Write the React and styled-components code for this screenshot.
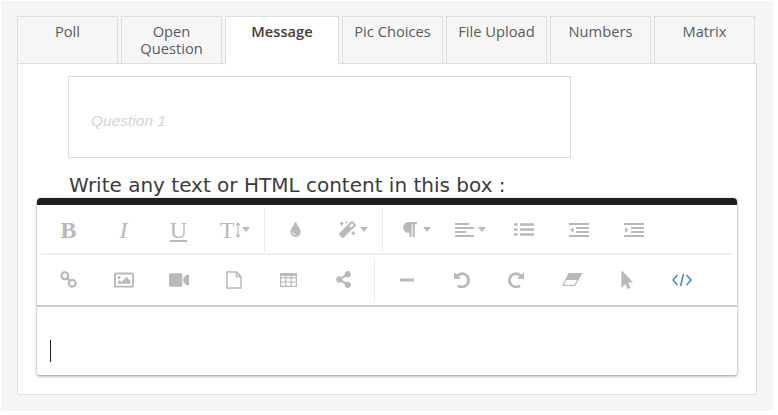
import React from "react";
import styled, { createGlobalStyle } from "styled-components";
import { FaTint, FaMagic, FaParagraph, FaVideo, FaRegImage, FaShareAlt, FaMinus, FaMousePointer } from "react-icons/fa";

const Global = createGlobalStyle`
  html, body { margin: 0; padding: 0; background: #fff; }
  * { box-sizing: border-box; }
`;
const Page = styled.div`
  margin: 1px 0 0 1px; width: 772px; height: 410px; background: #f5f5f5;
  padding: 15px 0 0 16px; font-family: "Open Sans", sans-serif;
`;
const Tabs = styled.div`display: flex; gap: 3px; height: 48px; position: relative; z-index: 1;`;
const Tab = styled.div`
  width: ${p => p.$active ? 114 : 101}px; height: ${p => p.$active ? 49 : 48}px;
  border: 1px solid #dfdfdf; border-bottom: ${p => p.$active ? "none" : "1px solid #dfdfdf"};
  background: ${p => p.$active ? "#fff" : "#f6f6f6"};
  color: ${p => p.$active ? "#4b3c33" : "#5a5a5a"};
  font-weight: ${p => p.$active ? 600 : 400}; font-size: 14.7px; line-height: 17px;
  text-align: center; padding-top: 6px;
`;
const Panel = styled.div`
  width: 740px; height: 332px; margin-top: -1px; background: #fff; border: 1px solid #dfdfdf;
  border-radius: 0 0 2px 2px; padding: 12px 19px 0;
`;
const QuestionBox = styled.div`
  margin-left: 31px; width: 503px; height: 82px; border: 1px solid #dcdcdc;
  display: flex; align-items: center; padding: 7px 0 0 22px;
  font: italic 15.5px "Liberation Sans", sans-serif; color: #d4d4d4;
`;
const Label = styled.div`
  margin: 15px 0 0 32px; font-size: 20px; line-height: 24px; color: #3c3c3c; height: 25px; white-space: nowrap;
  font-family: "DejaVu Sans", sans-serif;
`;
const Editor = styled.div`
  width: 700px; height: 177px; background: #fff; border-top: 7px solid #1f1f1f; border-radius: 4px 4px 2px 2px;
  box-shadow: 0 1px 3px rgba(0,0,0,.45);
  display: flex; flex-direction: column;
`;
const Toolbar = styled.div`height: 102px; padding: 1px 6px 0 4px; border-bottom: 2px solid #cfcfcf; flex: none;`;
const Row = styled.div`
  display: flex; align-items: center; height: 49px;
  border-bottom: ${p => p.$last ? "none" : "2px solid #f0f0f0"};
`;
const Sep = styled.span`width: 1px; height: 44px; background: #ececec; flex: none; margin-left: ${p => p.$ml || 0}px;`;
const Btn = styled.span`
  width: ${p => p.$w || 55}px; flex: none; display: flex; align-items: center; justify-content: center; gap: ${p => p.$gap ?? 4}px;
  color: ${p => p.$blue ? "#4d85e0" : "#b9b9b9"}; padding-right: ${p => p.$pr || 0}px;
`;
const Glyph = styled.span`
  font: ${p => p.$italic ? "italic" : "normal"} ${p => p.$bold ? 700 : 400} 24px/24px "Liberation Serif", serif;
  text-decoration: ${p => p.$under ? "underline" : "none"}; text-decoration-thickness: 2px; text-underline-offset: 2px;
`;
const Caret = styled.i`width: 0; height: 0; border: 4px solid transparent; border-top: 5px solid #b9b9b9; border-bottom: 0;`;
const Body = styled.div`flex: 1; padding: 33px 0 0 13px;`;
const Cursor = styled.div`width: 1px; height: 22px; background: #222;`;

const Icon = ({ w, h, children, fill = "none", stroke = "currentColor", sw = 2 }) => (
  <svg width={w} height={h} viewBox={`0 0 ${w} ${h}`} fill={fill} stroke={stroke} strokeWidth={sw}>{children}</svg>
);

const tabs = [["Poll"], ["Open Question"], ["Message", true], ["Pic Choices"], ["File Upload"], ["Numbers"], ["Matrix"]];

export default function App() {
  return (
    <Page>
      <Global />
      <Tabs>{tabs.map(([t, a]) => <Tab key={t} $active={a}>{t}</Tab>)}</Tabs>
      <Panel>
        <QuestionBox>Question 1</QuestionBox>
        <Label>Write any text or HTML content in this box :</Label>
        <Editor>
          <Toolbar>
            <Row>
              <Btn><Glyph $bold>B</Glyph></Btn>
              <Btn><Glyph $italic>I</Glyph></Btn>
              <Btn><Glyph $under>U</Glyph></Btn>
              <Btn $w={58} $gap={1}>
                <Glyph>T</Glyph>
                <Icon w={6} h={16} sw={1.2}><path d="M3 1v14M1 3.5 3 1l2 2.5M1 12.5 3 15l2-2.5" /></Icon>
                <Caret />
              </Btn>
              <Sep />
              <Btn $w={60}><FaTint size={15} /></Btn>
              <Btn $w={57}><FaMagic size={17} /><Caret /></Btn>
              <Sep />
              <Btn $w={66} $gap={5}><FaParagraph size={17} /><Caret /></Btn>
              <Btn $w={47} $pr={5}>
                <Icon w={19} h={15} sw={1.8}><path d="M0 2h14M0 6h19M0 10h11M0 14h19" /></Icon>
                <Caret />
              </Btn>
              <Btn>
                <Icon w={20} h={15} sw={2.4}><path d="M6 2.5h14M6 7.5h14M6 12.5h14" /><path d="M0 2.5h3.5M0 7.5h3.5M0 12.5h3.5" /></Icon>
              </Btn>
              <Btn>
                <Icon w={20} h={15} sw={2}>
                  <path d="M0 2h20M7 6h13M7 10h13M0 14h20" />
                  <path d="M4.5 5v6L1 8z" fill="currentColor" stroke="none" />
                </Icon>
              </Btn>
              <Btn>
                <Icon w={20} h={15} sw={2}>
                  <path d="M0 2h20M7 6h13M7 10h13M0 14h20" />
                  <path d="M1 5v6l3.5-3z" fill="currentColor" stroke="none" />
                </Icon>
              </Btn>
            </Row>
            <Row $last>
              <Btn>
                <Icon w={17} h={17} sw={2.2}>
                  <circle cx="4.8" cy="4.8" r="3.4" /><circle cx="12.2" cy="12.2" r="3.4" /><path d="M7 7l3 3" />
                </Icon>
              </Btn>
              <Btn><FaRegImage size={20} /></Btn>
              <Btn><FaVideo size={20} /></Btn>
              <Btn>
                <Icon w={16} h={18} sw={1.5}><path d="M1 1h9.5L15 5.5V17H1zM10.5 1v4.5H15" /></Icon>
              </Btn>
              <Btn>
                <Icon w={17} h={14} sw={1.2}>
                  <path d="M.6.6h15.8v12.8H.6zM.6 4.8h15.8M.6 9h15.8M5.8 3v10M11.2 3v10" />
                  <path d="M0 0h17v3H0z" fill="currentColor" stroke="none" />
                </Icon>
              </Btn>
              <Btn><FaShareAlt size={17} /></Btn>
              <Sep $ml={3} />
              <Btn $w={4} />
              <Btn><FaMinus size={16} /></Btn>
              <Btn>
                <Icon w={17} h={17} sw={2.8}>
                  <path d="M3.6 5.4A6.6 6.6 0 1 1 5 14.6" />
                  <path d="M1 1v7h7z" fill="currentColor" stroke="none" />
                </Icon>
              </Btn>
              <Btn>
                <Icon w={17} h={17} sw={2.8}>
                  <path d="M13.4 5.4A6.6 6.6 0 1 0 12 14.6" />
                  <path d="M16 1v7H9z" fill="currentColor" stroke="none" />
                </Icon>
              </Btn>
              <Btn>
                <Icon w={20} h={13} sw={1.2}>
                  <path d="M7 .6h12.4L12.8 12.4H1z" />
                  <path d="M7 0h13l-4 7H4z" fill="currentColor" stroke="none" />
                </Icon>
              </Btn>
              <Btn><FaMousePointer size={18} /></Btn>
              <Btn $blue>
                <Icon w={20} h={14} sw={1.6}><path d="M5.5 2 1 7l4.5 5M14.5 2 19 7l-4.5 5M11.5 1 8.5 13" /></Icon>
              </Btn>
            </Row>
          </Toolbar>
          <Body><Cursor /></Body>
        </Editor>
      </Panel>
    </Page>
  );
}
